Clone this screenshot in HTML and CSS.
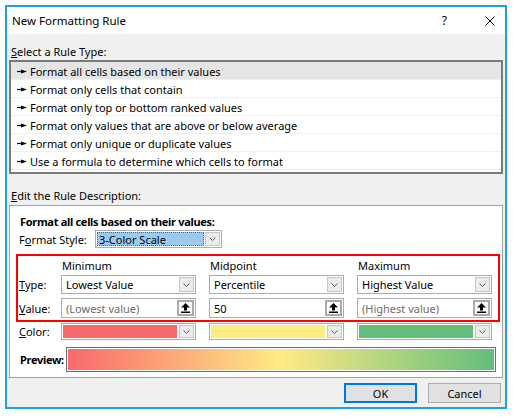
FILE: index.html
```html
<!doctype html>
<html>
<head>
<meta charset="utf-8">
<title>New Formatting Rule</title>
<link rel="stylesheet" href="styles.css">
</head>
<body>
<div class="dialog">
    <div class="titlebar">
        <span class="title">New Formatting Rule</span>
        <span class="help">?</span>
        <span class="close"><svg width="10" height="10" viewBox="0 0 10 10"><path d="M0.5 0.5L9.5 9.5M9.5 0.5L0.5 9.5" stroke="#000" stroke-width="1"/></svg></span>
    </div>
    <div class="body">
        <div class="section-label"><u>S</u>elect a Rule Type:</div>
        <ul class="rule-list">
            <li class="selected"><svg class="arrow" width="10" height="5" viewBox="0 0 10 5"><path d="M0 2.5H5"  stroke="#000" stroke-width="1.2"/><path d="M4 0.5L10 2.5L4 4.5Z" fill="#000"/></svg>Format all cells based on their values</li>
            <li><svg class="arrow" width="10" height="5" viewBox="0 0 10 5"><path d="M0 2.5H5"  stroke="#000" stroke-width="1.2"/><path d="M4 0.5L10 2.5L4 4.5Z" fill="#000"/></svg>Format only cells that contain</li>
            <li><svg class="arrow" width="10" height="5" viewBox="0 0 10 5"><path d="M0 2.5H5"  stroke="#000" stroke-width="1.2"/><path d="M4 0.5L10 2.5L4 4.5Z" fill="#000"/></svg>Format only top or bottom ranked values</li>
            <li><svg class="arrow" width="10" height="5" viewBox="0 0 10 5"><path d="M0 2.5H5"  stroke="#000" stroke-width="1.2"/><path d="M4 0.5L10 2.5L4 4.5Z" fill="#000"/></svg>Format only values that are above or below average</li>
            <li><svg class="arrow" width="10" height="5" viewBox="0 0 10 5"><path d="M0 2.5H5"  stroke="#000" stroke-width="1.2"/><path d="M4 0.5L10 2.5L4 4.5Z" fill="#000"/></svg>Format only unique or duplicate values</li>
            <li><svg class="arrow" width="10" height="5" viewBox="0 0 10 5"><path d="M0 2.5H5"  stroke="#000" stroke-width="1.2"/><path d="M4 0.5L10 2.5L4 4.5Z" fill="#000"/></svg>Use a formula to determine which cells to format</li>
        </ul>

        <div class="section-label second"><u>E</u>dit the Rule Description:</div>
        <div class="desc">
            <div class="desc-title">Format all cells based on their values:</div>
            <div class="style-row">
                <span class="lbl-style">F<u>o</u>rmat Style:</span>
                <div class="combo style-combo">
                    <span class="combo-text sel">3-Color Scale</span>
                    <span class="drop"><svg width="7" height="4" viewBox="0 0 7 4"><path d="M0.5 0.5L3.5 3.5L6.5 0.5" fill="none" stroke="#606060"/></svg></span>
                </div>
            </div>

            <div class="scale">
                <div class="grid head">
                    <span></span>
                    <span class="col-head">Minimum</span>
                    <span class="col-head">Midpoint</span>
                    <span class="col-head">Maximum</span>
                </div>
                <div class="grid row-type">
                    <span class="lbl"><u>T</u>ype:</span>
                    <div class="combo"><span class="combo-text">Lowest Value</span><span class="drop"><svg width="7" height="4" viewBox="0 0 7 4"><path d="M0.5 0.5L3.5 3.5L6.5 0.5" fill="none" stroke="#606060"/></svg></span></div>
                    <div class="combo"><span class="combo-text">Percentile</span><span class="drop"><svg width="7" height="4" viewBox="0 0 7 4"><path d="M0.5 0.5L3.5 3.5L6.5 0.5" fill="none" stroke="#606060"/></svg></span></div>
                    <div class="combo"><span class="combo-text">Highest Value</span><span class="drop"><svg width="7" height="4" viewBox="0 0 7 4"><path d="M0.5 0.5L3.5 3.5L6.5 0.5" fill="none" stroke="#606060"/></svg></span></div>
                </div>
                <div class="grid row-value">
                    <span class="lbl"><u>V</u>alue:</span>
                    <div class="field"><span class="field-text placeholder">(Lowest value)</span><span class="ref-btn"><svg width="9" height="10" viewBox="0 0 9 10"><path d="M4.5 0L9 4.5H6V7.5H3V4.5H0Z" fill="#000"/><rect x="0" y="8.5" width="9" height="1.5" fill="#000"/></svg></span></div>
                    <div class="field"><span class="field-text">50</span><span class="ref-btn"><svg width="9" height="10" viewBox="0 0 9 10"><path d="M4.5 0L9 4.5H6V7.5H3V4.5H0Z" fill="#000"/><rect x="0" y="8.5" width="9" height="1.5" fill="#000"/></svg></span></div>
                    <div class="field"><span class="field-text placeholder">(Highest value)</span><span class="ref-btn"><svg width="9" height="10" viewBox="0 0 9 10"><path d="M4.5 0L9 4.5H6V7.5H3V4.5H0Z" fill="#000"/><rect x="0" y="8.5" width="9" height="1.5" fill="#000"/></svg></span></div>
                </div>
            </div>

            <div class="grid row-color">
                <span class="lbl"><u>C</u>olor:</span>
                <div class="combo color-combo"><span class="swatch red"></span><span class="drop"><svg width="7" height="4" viewBox="0 0 7 4"><path d="M0.5 0.5L3.5 3.5L6.5 0.5" fill="none" stroke="#606060"/></svg></span></div>
                <div class="combo color-combo"><span class="swatch yellow"></span><span class="drop"><svg width="7" height="4" viewBox="0 0 7 4"><path d="M0.5 0.5L3.5 3.5L6.5 0.5" fill="none" stroke="#606060"/></svg></span></div>
                <div class="combo color-combo"><span class="swatch green"></span><span class="drop"><svg width="7" height="4" viewBox="0 0 7 4"><path d="M0.5 0.5L3.5 3.5L6.5 0.5" fill="none" stroke="#606060"/></svg></span></div>
            </div>

            <div class="preview-row">
                <span class="lbl-preview">Preview:</span>
                <div class="preview"><div class="preview-bar"></div></div>
            </div>
        </div>

        <div class="buttons">
            <button class="btn default">OK</button>
            <button class="btn">Cancel</button>
        </div>
    </div>
</div>
</body>
</html>
```

FILE: styles.css
```css
body{
    margin: 0;
    background-color: #fff;
    font-family: "Noto Sans", "Open Sans", sans-serif;
    font-size: 11px;
    color: #000;
}

.dialog{
    margin: 5px 0 0 5px;
    width: 498px;
    height: 400px;
    border: 2px solid #1ba1e6;
    display: flex;
    flex-direction: column;
}

.titlebar{
    height: 27px;
    background-color: #fff;
    display: flex;
    align-items: center;
    padding-left: 5px;
}
.title{
    flex: 1;
    font-size: 11.5px;
}
.help{
    font-size: 12px;
    margin-right: 38px;
}
.close{
    display: flex;
    margin-right: 10px;
}

.body{
    flex: 1;
    background-color: #f0f0f0;
    padding: 10px 2px 0 2px;
}

.section-label{
    line-height: 16px;
    padding-left: 2px;
}
.section-label.second{
    margin-top: 14px;
    margin-bottom: 1px;
}

.rule-list{
    list-style: none;
    margin: 0;
    padding: 0 0 2px 0;
    border: 2px solid #7a7a7a;
    background-color: #fff;
}
.rule-list li{
    box-sizing: border-box;
    height: 18px;
    display: flex;
    align-items: center;
    padding-left: 6px;
    padding-top: 1px;
    border-bottom: 1px solid #f0f0f0;
}
.rule-list li.selected{
    background-color: #e5e5e5;
}
.arrow{
    margin-right: 3px;
}

.desc{
    border: 1px solid #a0a0a0;
    background-color: #fff;
    padding-bottom: 5px;
}
.desc-title{
    margin-top: 8px;
    line-height: 16px;
    padding-left: 10px;
    font-weight: bold;
    letter-spacing: -0.3px;
}

.style-row{
    height: 18px;
    display: flex;
    align-items: center;
    padding-left: 9px;
}
.lbl-style{
    width: 76px;
}

.combo, .field{
    box-sizing: border-box;
    height: 100%;
    border: 1px solid #adadad;
    background-color: #fff;
    display: flex;
    align-items: stretch;
}
.combo-text, .field-text{
    flex: 1;
    display: flex;
    align-items: center;
    padding-left: 4px;
    white-space: nowrap;
    overflow: hidden;
}
.placeholder{
    color: #6d6d6d;
}
.drop{
    width: 13px;
    margin: 1px;
    border: 1px solid #c6c6c6;
    background-color: #ececec;
    display: flex;
    align-items: center;
    justify-content: center;
}

.style-combo{
    width: 127px;
}
.combo-text.sel{
    margin: 1px 0 1px 1px;
    padding-left: 2px;
    background-color: #9ccaef;
    outline: 1px dotted #4a6a8a;
    outline-offset: -1px;
}

.scale{
    margin: 6px 2px 0 6px;
    padding: 0 6px 2px 1px;
    border: 2px solid #ff0000;
}

.grid{
    display: grid;
    grid-template-columns: 29px repeat(3, 135px);
    column-gap: 13px;
    align-items: center;
}
.grid.head{
    height: 19px;
}
.col-head{
    padding-left: 1px;
}
.row-type{
    height: 19px;
}
.row-value{
    height: 20px;
    margin-top: 4px;
}
.ref-btn{
    width: 13px;
    margin: 1px;
    border: 2px solid #a9a9a9;
    background-color: #fff;
    display: flex;
    align-items: center;
    justify-content: center;
}

.row-color{
    height: 17px;
    margin-top: 1px;
    padding-left: 9px;
    padding-right: 8px;
}
.swatch{
    flex: 1;
    margin: 1px;
}
.swatch.red{ background-color: #f8696b; }
.swatch.yellow{ background-color: #ffeb84; }
.swatch.green{ background-color: #63be7b; }

.preview-row{
    height: 25px;
    margin-top: 7px;
    padding-left: 10px;
    display: flex;
    align-items: center;
}
.lbl-preview{
    width: 46px;
    font-weight: bold;
    letter-spacing: -0.3px;
}
.preview{
    box-sizing: border-box;
    width: 430px;
    height: 25px;
    border: 1px solid #6d6d6d;
    padding: 1px;
}
.preview-bar{
    height: 100%;
    background: linear-gradient(to right, #f8696b, #ffeb84, #63be7b);
}

.buttons{
    margin-top: 5px;
    padding-right: 2px;
    display: flex;
    justify-content: flex-end;
    column-gap: 11px;
}
.btn{
    box-sizing: border-box;
    width: 73px;
    height: 20px;
    padding: 0;
    border: 1px solid #adadad;
    background-color: #e1e1e1;
    font-family: "Noto Sans", "Open Sans", sans-serif;
    font-size: 11px;
    color: #000;
}
.btn.default{
    border: 2px solid #0078d7;
}
```
